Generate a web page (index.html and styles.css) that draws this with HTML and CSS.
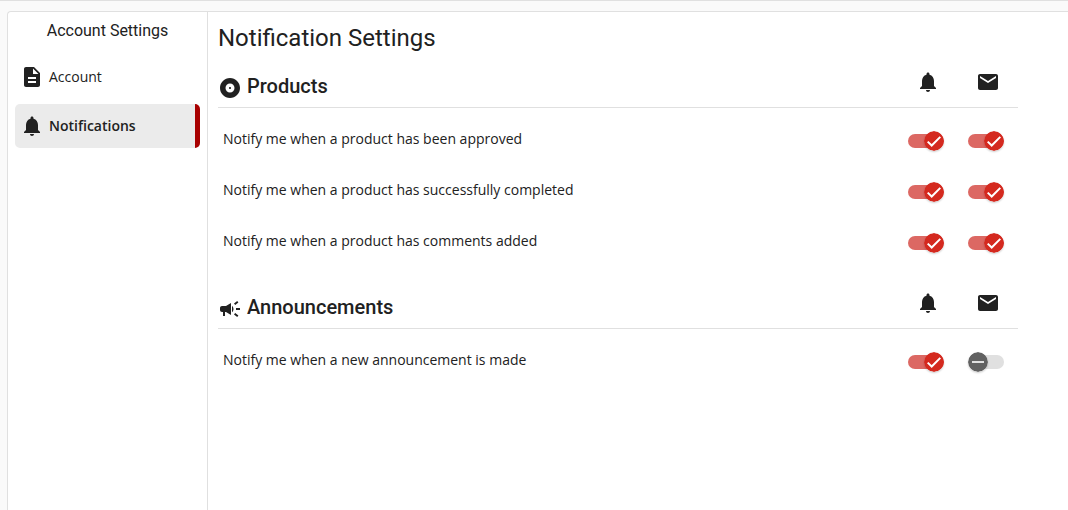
FILE: index.html
```html
<!DOCTYPE html>
<html lang="en">
<head>
<meta charset="utf-8">
<meta name="viewport" content="width=device-width, initial-scale=1">
<title>Notification Settings</title>
<link rel="stylesheet" href="styles.css">
</head>
<body>
<svg class="sprite" aria-hidden="true">
  <symbol id="bell" viewBox="0 0 24 24"><path d="M12 22c1.1 0 2-.9 2-2h-4c0 1.1.89 2 2 2zm6-6v-5c0-3.07-1.64-5.64-4.5-6.32V4c0-.83-.67-1.5-1.5-1.5s-1.5.67-1.5 1.5v.68C7.63 5.36 6 7.92 6 11v5l-2 2v1h16v-1l-2-2z"/></symbol>
  <symbol id="mail" viewBox="0 0 24 24"><path d="M20 4H4c-1.1 0-1.99.9-1.99 2L2 18c0 1.1.9 2 2 2h16c1.1 0 2-.9 2-2V6c0-1.1-.9-2-2-2zm0 4l-8 5-8-5V6l8 5 8-5v2z"/></symbol>
  <symbol id="description" viewBox="0 0 24 24"><path d="M14 2H6c-1.1 0-1.99.9-1.99 2L4 20c0 1.1.89 2 1.99 2H18c1.1 0 2-.9 2-2V8l-6-6zm2 16H8v-2h8v2zm0-4H8v-2h8v2zm-3-5V3.5L18.5 9H13z"/></symbol>
  <symbol id="album" viewBox="0 0 24 24"><path d="M12 2C6.48 2 2 6.48 2 12s4.48 10 10 10 10-4.48 10-10S17.52 2 12 2zm0 14.5c-2.49 0-4.5-2.01-4.5-4.5S9.51 7.5 12 7.5s4.5 2.01 4.5 4.5-2.01 4.5-4.5 4.5zm0-5.5c-.55 0-1 .45-1 1s.45 1 1 1 1-.45 1-1-.45-1-1-1z"/></symbol>
  <symbol id="campaign" viewBox="0 0 24 24"><path d="M18 11v2h4v-2h-4zM16 17.61c.96.71 2.21 1.65 3.2 2.39.4-.53.8-1.07 1.2-1.6-.99-.74-2.24-1.68-3.2-2.4-.4.54-.8 1.08-1.2 1.61zM20.4 5.6c-.4-.53-.8-1.07-1.2-1.6-.99.74-2.24 1.68-3.2 2.4.4.53.8 1.07 1.2 1.6.96-.72 2.21-1.65 3.2-2.4zM4 9c-1.1 0-2 .9-2 2v2c0 1.1.9 2 2 2h1v4h2v-4h1l5 3V6L8 9H4zm11.5 3c0-1.33-.58-2.53-1.5-3.35v6.69c.92-.81 1.5-2.01 1.5-3.34z"/></symbol>
  <symbol id="thumb" viewBox="0 0 20 20"><circle cx="10" cy="10" r="10"/><path class="on" d="M3.7 10.6 7.7 14.5 16.3 5.9"/><path class="off" d="M4 10h12"/></symbol>
</svg>
<div class="panel">
  <aside class="sidebar">
    <h2 class="sidebar-title">Account Settings</h2>
    <nav class="nav">
      <a class="nav-link" href="#account"><svg class="icon"><use href="#description"/></svg>Account</a>
      <a class="nav-link active" href="#notifications" aria-current="page"><svg class="icon"><use href="#bell"/></svg>Notifications</a>
    </nav>
  </aside>
  <main class="content">
    <h1 class="title">Notification Settings</h1>
    <section class="group">
      <div class="group-head">
        <h2 class="group-title"><svg class="icon"><use href="#album"/></svg>Products</h2>
        <svg class="icon" role="img" aria-label="In-app"><use href="#bell"/></svg>
        <svg class="icon" role="img" aria-label="Email"><use href="#mail"/></svg>
      </div>
      <div class="rows">
        <div class="row">
          <span class="row-text" id="approved">Notify me when a product has been approved</span>
          <label class="switch"><input type="checkbox" aria-labelledby="approved" checked><svg class="thumb"><use href="#thumb"/></svg></label>
          <label class="switch"><input type="checkbox" aria-labelledby="approved" checked><svg class="thumb"><use href="#thumb"/></svg></label>
        </div>
        <div class="row">
          <span class="row-text" id="completed">Notify me when a product has successfully completed</span>
          <label class="switch"><input type="checkbox" aria-labelledby="completed" checked><svg class="thumb"><use href="#thumb"/></svg></label>
          <label class="switch"><input type="checkbox" aria-labelledby="completed" checked><svg class="thumb"><use href="#thumb"/></svg></label>
        </div>
        <div class="row">
          <span class="row-text" id="comments">Notify me when a product has comments added</span>
          <label class="switch"><input type="checkbox" aria-labelledby="comments" checked><svg class="thumb"><use href="#thumb"/></svg></label>
          <label class="switch"><input type="checkbox" aria-labelledby="comments" checked><svg class="thumb"><use href="#thumb"/></svg></label>
        </div>
      </div>
    </section>
    <section class="group">
      <div class="group-head">
        <h2 class="group-title"><svg class="icon"><use href="#campaign"/></svg>Announcements</h2>
        <svg class="icon" role="img" aria-label="In-app"><use href="#bell"/></svg>
        <svg class="icon" role="img" aria-label="Email"><use href="#mail"/></svg>
      </div>
      <div class="rows">
        <div class="row">
          <span class="row-text" id="made">Notify me when a new announcement is made</span>
          <label class="switch"><input type="checkbox" aria-labelledby="made" checked><svg class="thumb"><use href="#thumb"/></svg></label>
          <label class="switch"><input type="checkbox" aria-labelledby="made"><svg class="thumb"><use href="#thumb"/></svg></label>
        </div>
      </div>
    </section>
  </main>
</div>
</body>
</html>
```

FILE: styles.css
```css
* { box-sizing: border-box; }

body {
  margin: 0;
  min-height: 100vh;
  display: flex;
  padding: 10px 0 0 7px;
  border-top: 1px solid #e0e0e0;
  background: #fafafa;
  color: #212121;
  font: 14px/20px "Open Sans", sans-serif;
}

h1, h2 { margin: 0; font-family: Roboto, sans-serif; font-weight: 400; }

.sprite { position: absolute; width: 0; height: 0; }
.icon { width: 24px; height: 24px; flex: none; fill: #212121; }

.panel {
  flex: 1;
  display: flex;
  background: #fff;
  border: 1px solid #e0e0e0;
  border-width: 1px 0 0 1px;
  border-radius: 4px 0 0 0;
}

.sidebar {
  flex: none;
  width: 200px;
  padding: 7px;
  border-right: 1px solid #e0e0e0;
}
.sidebar-title { font-size: 16px; line-height: 24px; text-align: center; }
.nav { display: grid; gap: 5px; margin-top: 12px; }
.nav-link {
  display: flex;
  align-items: center;
  gap: 5px;
  height: 44px;
  padding: 0 5px;
  border-radius: 5px;
  color: #212121;
  text-decoration: none;
}
.nav-link.active {
  background: #ebebeb;
  border-right: 5px solid #a80000;
  font-weight: 600;
}

.content { flex: 1; max-width: 820px; padding: 10px; }
.title { font-size: 24px; line-height: 32px; }

.group { padding-top: 2px; }
.group + .group { padding-top: 9px; }
.group-head, .row {
  display: grid;
  grid-template-columns: 1fr 60px 60px;
  align-items: center;
  justify-items: center;
}
.group-head { height: 52px; border-bottom: 1px solid #e0e0e0; }
.group-title {
  justify-self: start;
  display: flex;
  align-items: flex-end;
  gap: 5px;
  padding-top: 8px;
  font-size: 20px;
  font-weight: 500;
  line-height: 28px;
}
.rows { padding-top: 7px; }
.row { height: 51px; }
.row-text { justify-self: start; padding: 0 5px 4px; }

.switch { position: relative; display: flex; margin-right: 4px; cursor: pointer; }
.switch input {
  appearance: none;
  width: 36px;
  height: 14px;
  margin: 0;
  border-radius: 7px;
  background: #e0e0e0;
  cursor: pointer;
}
.switch input:checked { background: #dc6863; }
.thumb {
  position: absolute;
  top: -3px;
  left: 0;
  width: 20px;
  height: 20px;
  border-radius: 50%;
  box-shadow: 0 1px 2px rgba(0, 0, 0, 0.2);
  fill: #616161;
  --on: none;
  --off: #e0e0e0;
}
.switch input:checked + .thumb { left: 16px; fill: #d4291f; --on: #fff; --off: none; }
.on { fill: none; stroke: var(--on); stroke-width: 2px; }
.off { fill: none; stroke: var(--off); stroke-width: 2px; }
```
